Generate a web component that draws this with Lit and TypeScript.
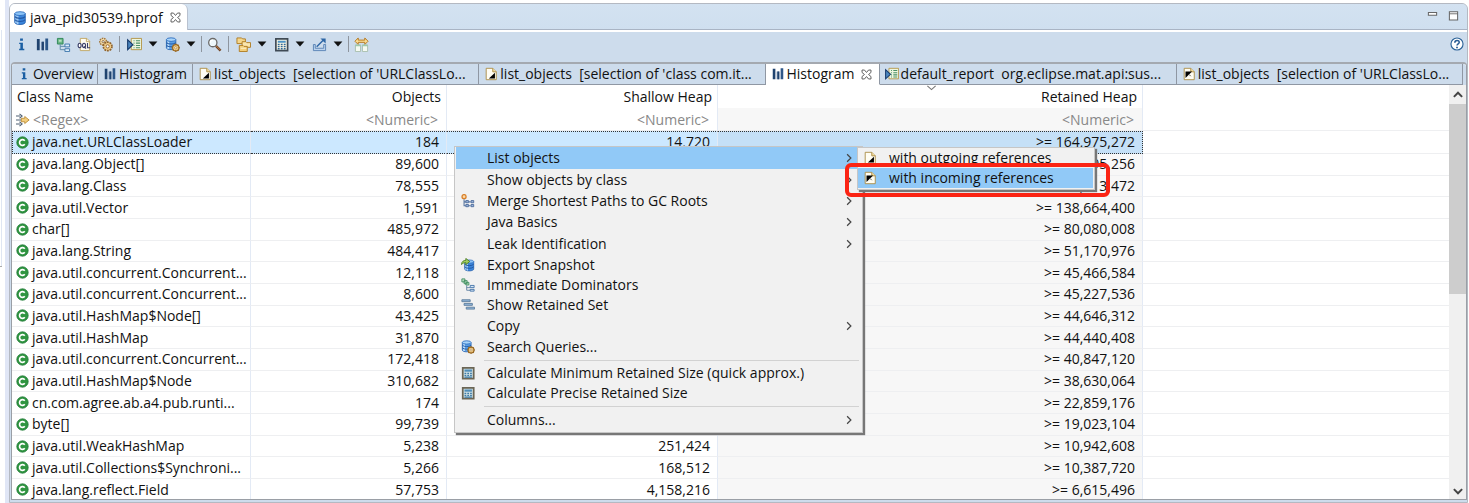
import { LitElement, html, css, svg, TemplateResult } from "lit";
import { customElement, property } from "lit/decorators.js";
import { classMap } from "lit/directives/class-map.js";

const database = svg`
  <path d="M2 3v10c0 1.400 2.700 2.400 6 2.400s6-1 6-2.400V3z" fill="#3b86dc" stroke="#2560ae"/>
  <path d="M3.500 4v10M5.500 5v10" stroke="#b9dcfa" stroke-width="1.400"/>
  <path d="M2 6.500c2 2.600 10 2.600 12 0M2 10c2 2.600 10 2.600 12 0" fill="none" stroke="#2358a4" stroke-width="1.300"/>
  <ellipse cx="8" cy="3" rx="6" ry="2.200" fill="#8cc4f7" stroke="#2f6fc0"/>`;

const calculator = svg`
  <path d="M2 2h12.500v12.500H2z" fill="#fbf8e6" stroke="#3f4a55" stroke-width="1.800"/>
  <path d="M4 4h8.500v2.200H4z" fill="#4d93c6"/>
  <path d="M4 8h2m1.200 0h2m1.200 0h2M4 10.300h2m1.200 0h2m1.200 0h2M4 12.500h2m1.200 0h2m1.200 0h2" stroke="#2f6796" stroke-width="1.500"/>`;

const menuCalculator = svg`
  <path d="M2 2h12.500v12.500H2z" fill="#cfe0e4" stroke="#6b6656" stroke-width="2"/>
  <path d="M4 4h8.500v2.500H4z" fill="#4f8db8"/>
  <path d="M4 8.500h2m1.200 0h2m1.200 0h2M4 10.700h2m1.200 0h2m1.200 0h2M4 12.800h8.500" stroke="#3d7ba6" stroke-width="1.400"/>`;

const page = svg`<path d="M2.500 1.500h7.500l4 4v9h-11.500z" fill="#fffdf3" stroke="#a8893f"/><path d="M10 1.500v4h4" fill="#f2dca0" stroke="#a8893f"/>`;

const smallGear = svg`
  <circle cx="11.500" cy="11.500" r="3.400" fill="#f2cf8a" stroke="#9b6a24" stroke-width="1.300"/>
  <path d="M11.500 7v1.500m0 6V16M7 11.500h1.500m6 0H16M8.400 8.400l1 1m4.200 4.200l1 1m0-6.200l-1 1m-4.200 4.200l-1 1" stroke="#9b6a24" stroke-width="1.200"/>
  <circle cx="11.500" cy="11.500" r="1.200" fill="#fff" stroke="#9b6a24" stroke-width=".6"/>`;

const icons: Record<string, TemplateResult> = {
  database,
  info: svg`<path d="M6.500 1.500h3v2.500h-3zM5.500 6h4v6.500H11V14H5.500v-1.500h1.300v-5H5.500z" fill="#1b5fa3"/>`,
  histogram: svg`<path d="M2 2h3v12H2z" fill="#20436f"/><path d="M6.500 5h3v9h-3z" fill="#6b84a6"/><path d="M7.500 5h2v9h-2z" fill="#20436f"/><path d="M11 1.500h3V14h-3z" fill="#2d5688"/>`,
  tree: svg`
    <path d="M1.500 1.500h6v6h-6z" fill="#69b584" stroke="#2e8757"/><path d="M3 3h3v2H3z" fill="#b5dfbe"/>
    <path d="M4.500 8v5.500H10M4.500 10H10" fill="none" stroke="#5c8aa8"/>
    <path d="M9.500 7.500h5v3h-5zM9.500 12.500h5v3h-5z" fill="#dcecf8" stroke="#3f78ae"/>`,
  oql: svg`
    <path d="M3.500 1.500h7l3 3v10h-10z" fill="#fffdf3" stroke="#c2a865"/>
    <path d="M10 1.500v3.500h3.500" fill="none" stroke="#c2a865"/>
    <ellipse cx="2.800" cy="9" rx="1.600" ry="2.300" fill="#fff" stroke="#3b3f68" stroke-width="1.200"/>
    <ellipse cx="7.500" cy="9" rx="1.600" ry="2.300" fill="#fff" stroke="#3b3f68" stroke-width="1.200"/>
    <path d="M7.500 10l2 2.500M11.200 6.500v5h2.800" fill="none" stroke="#3b3f68" stroke-width="1.200"/>`,
  gears: svg`
    <circle cx="5.500" cy="5" r="3.600" fill="#f7e3b8" stroke="#a0753b" stroke-width="1.600" stroke-dasharray="1.700 .8"/>
    <circle cx="5.500" cy="5" r="1.300" fill="#cddcec" stroke="#a0753b"/>
    <circle cx="10.300" cy="10" r="4.600" fill="#f0cb86" stroke="#8f6430" stroke-width="1.800" stroke-dasharray="2 .9"/>
    <circle cx="10.300" cy="10" r="1.700" fill="#fff" stroke="#8f6430"/>`,
  report: svg`
    <path d="M4.500 1.500h11v12h-11z" fill="#eef6e0" stroke="#b39445"/>
    <path d="M7 4h1m1.500 0H14M7 6.500h1m1.500 0H14M7 9h1m1.500 0H14M7 11.500h1m1.500 0H14" stroke="#4b9065" stroke-width="1.200"/>
    <path d="M.7 3v10.500l5.600-5.200z" fill="#4a86bf" stroke="#173b6c" stroke-width="1.200"/>`,
  dbgear: svg`
    <path d="M1.500 3v8.500c0 1.200 2.200 2 5 2s5-.8 5-2V3z" fill="#5a9fe6" stroke="#2a66b2"/>
    <path d="M3.500 4v8.500" stroke="#c4e2fb" stroke-width="2"/>
    <path d="M1.500 6c2 2 8 2 10 0M1.500 9c2 2 8 2 10 0" fill="none" stroke="#2a5fa9" stroke-width="1.100"/>
    <ellipse cx="6.500" cy="2.800" rx="5" ry="1.900" fill="#a8d4fa" stroke="#2f6fc0"/>${smallGear}`,
  search: svg`
    <path d="M9.500 9.500l5 5" stroke="#704321" stroke-width="2.600"/><path d="M10 9.700l4 4" stroke="#c48955"/>
    <circle cx="6.200" cy="6" r="4.400" fill="#eef7fb" stroke="#6b6a68" stroke-width="1.400"/>
    <path d="M3.500 6c0-1.700 1.200-2.700 2.700-2.700" fill="none" stroke="#fff" stroke-width="1.200"/>`,
  folders: svg`
    <path d="M1 1h5l1 1h3v5H1z" fill="#f5d78c" stroke="#b07d23"/>
    <path d="M6.500 5h4l1 1h4v5h-9z" fill="#fbe6ad" stroke="#b07d23"/>
    <path d="M3.500 9h4l1 1h3.500v5.500H3.500z" fill="#f3cf7c" stroke="#b07d23"/>
    <path d="M5 12h6" stroke="#fff4cf"/>`,
  calculator,
  menuCalculator,
  share: svg`
    <path d="M1.500 8v6.500h13V8h-2v4h-9V8z" fill="#bcd3ed" stroke="#5b84b5"/>
    <path d="M5 10.500L12.500 3" stroke="#2d66a5" stroke-width="1.500"/>
    <path d="M9 1.500h5.500V7z" fill="#2d66a5"/>`,
  compare: svg`
    <path d="M1 4.500L4.500 1v2.300h7V1L15 4.500 11.500 8V5.700h-7V8z" fill="#f9dc92" stroke="#b5771d"/>
    <path d="M1.500 8.500h5.500v7H1.500zM9 8.500h5.500v7H9z" fill="#f5faf2" stroke="#a9bfae"/>
    <path d="M1.500 9h5.500M9 9h5.500" stroke="#9fc9ad" stroke-width="1.500"/>`,
  outgoing: svg`${page}<path d="M12.500 6.500V13H5.500z" fill="#000"/>`,
  incoming: svg`${page}<path d="M4 5h7.500L4 12.500z" fill="#000"/><path d="M8 8.500l2 2" stroke="#444"/>`,
  filter: svg`
    <path d="M0 3.500h5M0 8h7M0 12.500h5" stroke="#4f6175" stroke-width="1.200"/>
    <path d="M4 1l3 2.500L4 6M4 10l3 2.500L4 15" fill="none" stroke="#4f6175" stroke-width="1.200"/>
    <path d="M6 6h4V4L15 8l-5 4v-2H6z" fill="#f3cd7c" stroke="#b98a33"/>`,
  cls: svg`
    <circle cx="8" cy="8" r="7" fill="#2f9540" stroke="#1f7a38"/>
    <path d="M10.800 5.800A3.600 3.600 0 1 0 10.800 10.200" fill="none" stroke="#fff" stroke-width="2"/>`,
  close: svg`<path d="M2.500 2.500h3L8 5.500l2.500-3h3v3L10.500 8l3 2.500v3h-3L8 10.500l-2.500 3h-3v-3L5.500 8l-3-2.500z" fill="#fff" stroke="#5e5e5e" stroke-width="1.200"/>`,
  minimize: svg`<path d="M2 3.500h12v4H2z" fill="#fff" stroke="#666" stroke-width="1.500"/>`,
  maximize: svg`<path d="M2 2.500h12v12H2z" fill="#fff" stroke="#666" stroke-width="1.500"/><path d="M2 5.500h12" stroke="#666" stroke-width="1.300"/>`,
  help: svg`
    <circle cx="8" cy="8" r="6.900" fill="#fff" stroke="#2e6499" stroke-width="1.300"/>
    <path d="M5.500 6.500C5.500 3 10.700 3.200 10.500 6.200 10.300 7.800 8 7.800 8 9.800" fill="none" stroke="#2a5d94" stroke-width="1.800"/>
    <path d="M7 11h2v1.800H7z" fill="#2a5d94"/>`,
  paths: svg`
    <circle cx="3.500" cy="3" r="2.300" fill="#fbd9a8" stroke="#d9812b" stroke-width="1.500"/>
    <path d="M3.500 6v7.500h2M3.500 9h2M9 9h2M9 13.500h2" stroke="#55739f" fill="none" stroke-width="1.200"/>
    <path d="M5.500 7.500h3v2.500h-3zM11.500 7.500h3v2.500h-3zM5.500 12h3v2.500h-3zM11.500 12h3v2.500h-3z" fill="#9db5d8" stroke="#4a6a9c"/>`,
  exportdb: svg`<g transform="translate(2.500 1.500) scale(.86)">${database}</g><path d="M.5 7.500C.7 4 3 2.700 5.500 2.700V.5L10 4 5.500 7.500V5.300C3.500 5.200 2 6 .5 7.500z" fill="#a3cf62" stroke="#4d7f21"/>`,
  dominators: svg`
    <path d="M1 1h3.500v3.500H1zM3.500 3H7v3.500H3.500zM5.500 5H9v3H5.500z" fill="#bfe2c3" stroke="#3d8b5e"/>
    <path d="M6.500 8.500V14h4M6.500 11h4" fill="none" stroke="#5c7e9f"/>
    <path d="M10.500 8.500h4.500v2.500h-4.500zM10.500 13h4.500v2h-4.500z" fill="#d6e6f6" stroke="#3f6fa6"/>`,
  retained: svg`<path d="M1 2h9.500v2.200H1zM3.500 6.200h9.500v2.200H3.500zM6 10.500h9.500v2.200H6z" fill="#8fb4d8" stroke="#5a7c9c"/>`,
  chevron: svg`<path d="M5.500 3l5 5-5 5" fill="none" stroke="#444" stroke-width="1.600"/>`,
  up: svg`<path d="M2.500 10.500L8 5l5.500 5.500" fill="none" stroke="#444" stroke-width="2.600"/>`,
  down: svg`<path d="M2.500 5.500L8 11l5.500-5.500" fill="none" stroke="#444" stroke-width="2.600"/>`,
  sorted: svg`<path d="M2 5.500L8 11l6-5.500" fill="none" stroke="#777" stroke-width="1.600"/>`,
  triangle: svg`<path d="M1 4h14l-7 8z" fill="#111"/>`,
};

@customElement("mat-icon")
class MatIcon extends LitElement {
  @property() name = "";
  @property({ type: Number }) size = 14;

  static styles = css`
    :host { display: inline-flex; flex: none; }
    svg { display: block; }
  `;

  render() {
    return html`<svg width=${this.size} height=${this.size} viewBox="0 0 16 16" aria-hidden="true">${icons[this.name]}</svg>`;
  }
}

type Tool = { icon: string; label: string; menu?: boolean } | "sep";
const tools: Tool[] = [
  { icon: "info", label: "Overview" },
  { icon: "histogram", label: "Histogram" },
  { icon: "tree", label: "Dominator tree" },
  { icon: "oql", label: "OQL" },
  { icon: "gears", label: "Thread overview" },
  "sep",
  { icon: "report", label: "Run report", menu: true },
  { icon: "dbgear", label: "Query browser", menu: true },
  "sep",
  { icon: "search", label: "Find" },
  "sep",
  { icon: "folders", label: "Group result", menu: true },
  { icon: "calculator", label: "Calculate retained size", menu: true },
  { icon: "share", label: "Export", menu: true },
  "sep",
  { icon: "compare", label: "Compare" },
];

const tabs = [
  { icon: "info", text: "Overview", grow: "g-a" },
  { icon: "histogram", text: "Histogram", grow: "g-b" },
  { icon: "outgoing", text: "list_objects  [selection of 'URLClassLo...", grow: "g-d" },
  { icon: "outgoing", text: "list_objects  [selection of 'class com.it...", grow: "g-d" },
  { icon: "histogram", text: "Histogram", grow: "g-c", active: true },
  { icon: "report", text: "default_report  org.eclipse.mat.api:sus...", grow: "g-e" },
  { icon: "incoming", text: "list_objects  [selection of 'URLClassLo...", grow: "g-d" },
];

const rows = [
  ["java.net.URLClassLoader", "184", "14,720", "164,975,272"],
  ["java.lang.Object[]", "89,600", "", "154,795,256"],
  ["java.lang.Class", "78,555", "", "147,213,472"],
  ["java.util.Vector", "1,591", "", "138,664,400"],
  ["char[]", "485,972", "", "80,080,008"],
  ["java.lang.String", "484,417", "", "51,170,976"],
  ["java.util.concurrent.Concurrent...", "12,118", "", "45,466,584"],
  ["java.util.concurrent.Concurrent...", "8,600", "", "45,227,536"],
  ["java.util.HashMap$Node[]", "43,425", "", "44,646,312"],
  ["java.util.HashMap", "31,870", "", "44,440,408"],
  ["java.util.concurrent.Concurrent...", "172,418", "", "40,847,120"],
  ["java.util.HashMap$Node", "310,682", "", "38,630,064"],
  ["cn.com.agree.ab.a4.pub.runti...", "174", "", "22,859,176"],
  ["byte[]", "99,739", "", "19,023,104"],
  ["java.util.WeakHashMap", "5,238", "251,424", "10,942,608"],
  ["java.util.Collections$Synchroni...", "5,266", "168,512", "10,387,720"],
  ["java.lang.reflect.Field", "57,753", "4,158,216", "6,615,496"],
];

type Item = { text: string; icon?: string; sub?: boolean; on?: boolean } | "sep";
const menu: Item[] = [
  { text: "List objects", sub: true, on: true },
  { text: "Show objects by class", sub: true },
  { text: "Merge Shortest Paths to GC Roots", icon: "paths", sub: true },
  { text: "Java Basics", sub: true },
  { text: "Leak Identification", sub: true },
  { text: "Export Snapshot", icon: "exportdb" },
  { text: "Immediate Dominators", icon: "dominators" },
  { text: "Show Retained Set", icon: "retained" },
  { text: "Copy", sub: true },
  { text: "Search Queries...", icon: "dbgear" },
  "sep",
  { text: "Calculate Minimum Retained Size (quick approx.)", icon: "menuCalculator" },
  { text: "Calculate Precise Retained Size", icon: "menuCalculator" },
  "sep",
  { text: "Columns...", sub: true },
];
const submenu: Item[] = [
  { text: "with outgoing references", icon: "outgoing" },
  { text: "with incoming references", icon: "incoming", on: true },
];

@customElement("app-root")
class AppRoot extends LitElement {
  static styles = css`
    :host {
      display: flex;
      position: relative;
      height: 100vh;
      overflow: hidden;
      box-sizing: border-box;
      background: #fff;
      color: #111;
      font: 14px/20px "Open Sans", "Noto Sans", sans-serif;
    }
    * { box-sizing: border-box; }
    button, input {
      font: inherit;
      color: inherit;
      border: 0;
      padding: 0;
      margin: 0;
      background: none;
      text-align: left;
    }
    .neighbour { flex: none; width: 5px; display: flex; flex-direction: column; }
    .neighbour-top { flex: 1; margin-top: 30px; width: 2px; border-right: 1px solid #dfe6f3; }
    .neighbour-bottom { flex: 1; width: 2px; border-top: 1px solid #aaa; }
    .sash { flex: none; width: 4px; background: #e0e6f6; }
    .editor {
      flex: 1;
      min-width: 0;
      display: flex;
      flex-direction: column;
      margin: 3px 1px 0 0;
      border: 1px solid #b4b9c2;
      border-radius: 6px 6px 0 0;
      background: #cddcec;
      overflow: hidden;
    }
    .files {
      flex: none;
      display: flex;
      align-items: center;
      height: 28px;
      background: linear-gradient(#d3e2f1, #cfdfef);
      border-bottom: 2px solid #fff;
      box-shadow: inset 0 -1px #a9b4c4;
    }
    .file {
      display: flex;
      align-items: center;
      align-self: stretch;
      gap: 3px;
      padding: 1px 5px 0 3px;
      background: #fff;
      border-right: 1px solid #b9c2d0;
      border-radius: 0 6px 0 0;
    }
    .file mat-icon:last-child { margin-left: 3px; }
    .window { margin-left: auto; display: flex; gap: 10px; padding: 0 8px 4px 0; }
    .window button { display: flex; }
    .toolbar {
      flex: none;
      display: flex;
      align-items: center;
      height: 30px;
      padding: 0 3px 6px 1px;
    }
    .tool { width: 21px; display: flex; justify-content: center; }
    .tool.wide { width: 24px; }
    .drop { width: 14px; display: flex; justify-content: center; }
    .gap { width: 6px; height: 16px; display: flex; justify-content: center; }
    .gap::before { content: ""; width: 1px; background: #8e959e; }
    .help { margin-left: auto; display: flex; }
    .folder {
      flex: 1;
      min-height: 0;
      display: flex;
      flex-direction: column;
      margin: 0 0 2px 1px;
      border: 1px solid #9a9fa6;
      border-top: 2px solid #a4a9b0;
      border-radius: 4px 4px 0 0;
      background: #fff;
    }
    .tabs {
      flex: none;
      display: flex;
      height: 21px;
      padding-right: 3px;
      background: #cddcec;
      border-radius: 3px 3px 0 0;
    }
    .tab {
      display: flex;
      align-items: center;
      gap: 2px;
      min-width: 0;
      padding: 0 5px;
      white-space: pre;
      overflow: hidden;
      border-right: 1px solid #8f97a3;
      border-bottom: 1px solid #8f97a3;
    }
    .tab.active { background: #fff; border-bottom-color: #fff; }
    .tab.active mat-icon:last-child { margin-left: 3px; }
    .g-a { flex: 75 1 0; }
    .g-b { flex: 84 1 0; }
    .g-c { flex: 103 1 0; }
    .g-d { flex: 275 1 0; }
    .g-e { flex: 286 1 0; }
    .view { flex: 1; min-height: 0; display: flex; }
    .grid { flex: 1; min-width: 0; height: 100%; overflow: hidden; }
    table { width: 100%; height: calc(100% + 2px); table-layout: fixed; border-collapse: separate; border-spacing: 0; }
    .c-name { width: 239px; }
    .c-objects { width: 196px; }
    .c-shallow { width: 271px; }
    .c-retained { width: 425px; }
    th, td {
      padding: 0 7px 0 4px;
      border-right: 1px solid #e3eaf5;
      border-bottom: 1px solid #eeeff1;
      text-align: right;
      font-weight: 400;
      white-space: nowrap;
      line-height: 18px;
    }
    th { padding: 1px 5px 0; border-bottom: 0; height: 23px; position: relative; }
    thead td { padding: 1px 8px 0 4px; height: 23px; color: #888; }
    th:first-child, td:first-child { text-align: left; }
    th:last-child, td:last-child { border-right: 0; }
    .sorted { background: #f7f7f7; }
    .sorted-mark { position: absolute; left: 49%; top: -3px; display: flex; }
    .cell { display: flex; align-items: center; gap: 3px; }
    .filter { display: block; width: 100%; height: 18px; text-align: right; outline: 0; }
    .cell .filter { text-align: left; }
    .filter::placeholder { color: #888; opacity: 1; }
    .selected td:not(:last-child) {
      background: #cce8ff;
      border-top: 1px dotted #333;
      border-bottom: 1px dotted #333;
    }
    .selected td:first-child { border-left: 1px dotted #333; padding-left: 3px; }
    .selected td.sorted { background: #c5e0f7; border-right: 1px dotted #333; }
    .scroll {
      flex: none;
      width: 17px;
      display: flex;
      flex-direction: column;
      align-items: center;
      padding: 4px 0 2px;
      background: #f0f0f0;
    }
    .track { flex: 1; align-self: stretch; margin: 3px 0 1px; }
    .thumb { height: 50%; background: #cdcdcd; }
    .menu {
      position: absolute;
      display: flex;
      flex-direction: column;
      background: #f1f1f1;
      border: 1px solid #c6c6c6;
      box-shadow: 2px 2px 1px #777;
    }
    .context { left: 454px; top: 146px; width: 409px; padding: 0 1px 1px; }
    .nested { left: 857px; top: 147px; width: 238px; padding: 0 1px 1px 0; }
    .item {
      display: grid;
      grid-template-columns: 31px 1fr 12px;
      align-items: center;
      height: 22px;
      line-height: 20px;
      padding-right: 6px;
      white-space: nowrap;
    }
    .item.iconic { height: 20px; }
    .item.on { background: #91c9f7; }
    .item .slot { display: flex; padding-left: 5px; }
    .line { height: 6px; margin: 0 2px 0 28px; display: flex; align-items: center; }
    .line::before { content: ""; flex: 1; height: 1px; background: #d2d2d2; }
    .callout {
      position: absolute;
      left: 845px;
      top: 163px;
      width: 265px;
      height: 34px;
      border: 4px solid #fb2414;
      border-radius: 6px;
      pointer-events: none;
    }
  `;

  private renderItem(item: Item) {
    if (item === "sep") return html`<div class="line" role="separator"></div>`;
    return html`<button role="menuitem" class=${classMap({ item: true, on: !!item.on, iconic: !!item.icon })}>
      <span class="slot">${item.icon ? html`<mat-icon name=${item.icon}></mat-icon>` : ""}</span>
      <span>${item.text}</span>
      ${item.sub ? html`<mat-icon name="chevron" size="12"></mat-icon>` : ""}
    </button>`;
  }

  private renderTool(tool: Tool) {
    if (tool === "sep") return html`<span class="gap"></span>`;
    return html`
      <button class=${classMap({ tool: true, wide: !!tool.menu })} aria-label=${tool.label}>
        <mat-icon name=${tool.icon} size="15"></mat-icon>
      </button>
      ${tool.menu
        ? html`<button class="drop" aria-label="${tool.label} options"><mat-icon name="triangle" size="10"></mat-icon></button>`
        : ""}`;
  }

  render() {
    return html`
      <div class="neighbour"><div class="neighbour-top"></div><div class="neighbour-bottom"></div></div>
      <div class="sash"></div>
      <main class="editor">
        <div class="files">
          <button class="file">
            <mat-icon name="database"></mat-icon><span>java_pid30539.hprof</span><mat-icon name="close" size="13"></mat-icon>
          </button>
          <div class="window">
            <button aria-label="Minimize"><mat-icon name="minimize" size="11"></mat-icon></button>
            <button aria-label="Maximize"><mat-icon name="maximize" size="11"></mat-icon></button>
          </div>
        </div>
        <div class="toolbar">
          ${tools.map((t) => this.renderTool(t))}
          <button class="help" aria-label="Help"><mat-icon name="help"></mat-icon></button>
        </div>
        <section class="folder">
          <div class="tabs" role="tablist">
            ${tabs.map(
              (t) => html`<button role="tab" aria-selected=${t.active ? "true" : "false"}
                class=${classMap({ tab: true, active: !!t.active, [t.grow]: true })}><mat-icon name=${t.icon}></mat-icon><span>${t.text}</span>${t.active ? html`<mat-icon name="close" size="13"></mat-icon>` : ""}</button>`
            )}
          </div>
          <div class="view">
            <div class="grid">
              <table>
                <colgroup>
                  <col class="c-name" /><col class="c-objects" /><col class="c-shallow" /><col class="c-retained" /><col />
                </colgroup>
                <thead>
                  <tr>
                    <th>Class Name</th>
                    <th>Objects</th>
                    <th>Shallow Heap</th>
                    <th><span class="sorted-mark"><mat-icon name="sorted" size="11"></mat-icon></span>Retained Heap</th>
                    <th></th>
                  </tr>
                  <tr>
                    <td>
                      <div class="cell"><mat-icon name="filter"></mat-icon><input class="filter" aria-label="Class name filter" placeholder="<Regex>" /></div>
                    </td>
                    <td><input class="filter" aria-label="Objects filter" placeholder="<Numeric>" /></td>
                    <td><input class="filter" aria-label="Shallow heap filter" placeholder="<Numeric>" /></td>
                    <td class="sorted"><input class="filter" aria-label="Retained heap filter" placeholder="<Numeric>" /></td>
                    <td></td>
                  </tr>
                </thead>
                <tbody>
                  ${rows.map(
                    (r, i) => html`<tr class=${classMap({ selected: i === 0 })}>
                      <td><div class="cell"><mat-icon name="cls" size="13"></mat-icon><span>${r[0]}</span></div></td>
                      <td>${r[1]}</td>
                      <td>${r[2]}</td>
                      <td class="sorted">&gt;= ${r[3]}</td>
                      <td></td>
                    </tr>`
                  )}
                </tbody>
              </table>
            </div>
            <div class="scroll">
              <mat-icon name="up" size="12"></mat-icon>
              <div class="track"><div class="thumb"></div></div>
              <mat-icon name="down" size="12"></mat-icon>
            </div>
          </div>
        </section>
      </main>
      <div class="menu context" role="menu">${menu.map((m) => this.renderItem(m))}</div>
      <div class="menu nested" role="menu">${submenu.map((m) => this.renderItem(m))}</div>
      <div class="callout"></div>
    `;
  }
}
